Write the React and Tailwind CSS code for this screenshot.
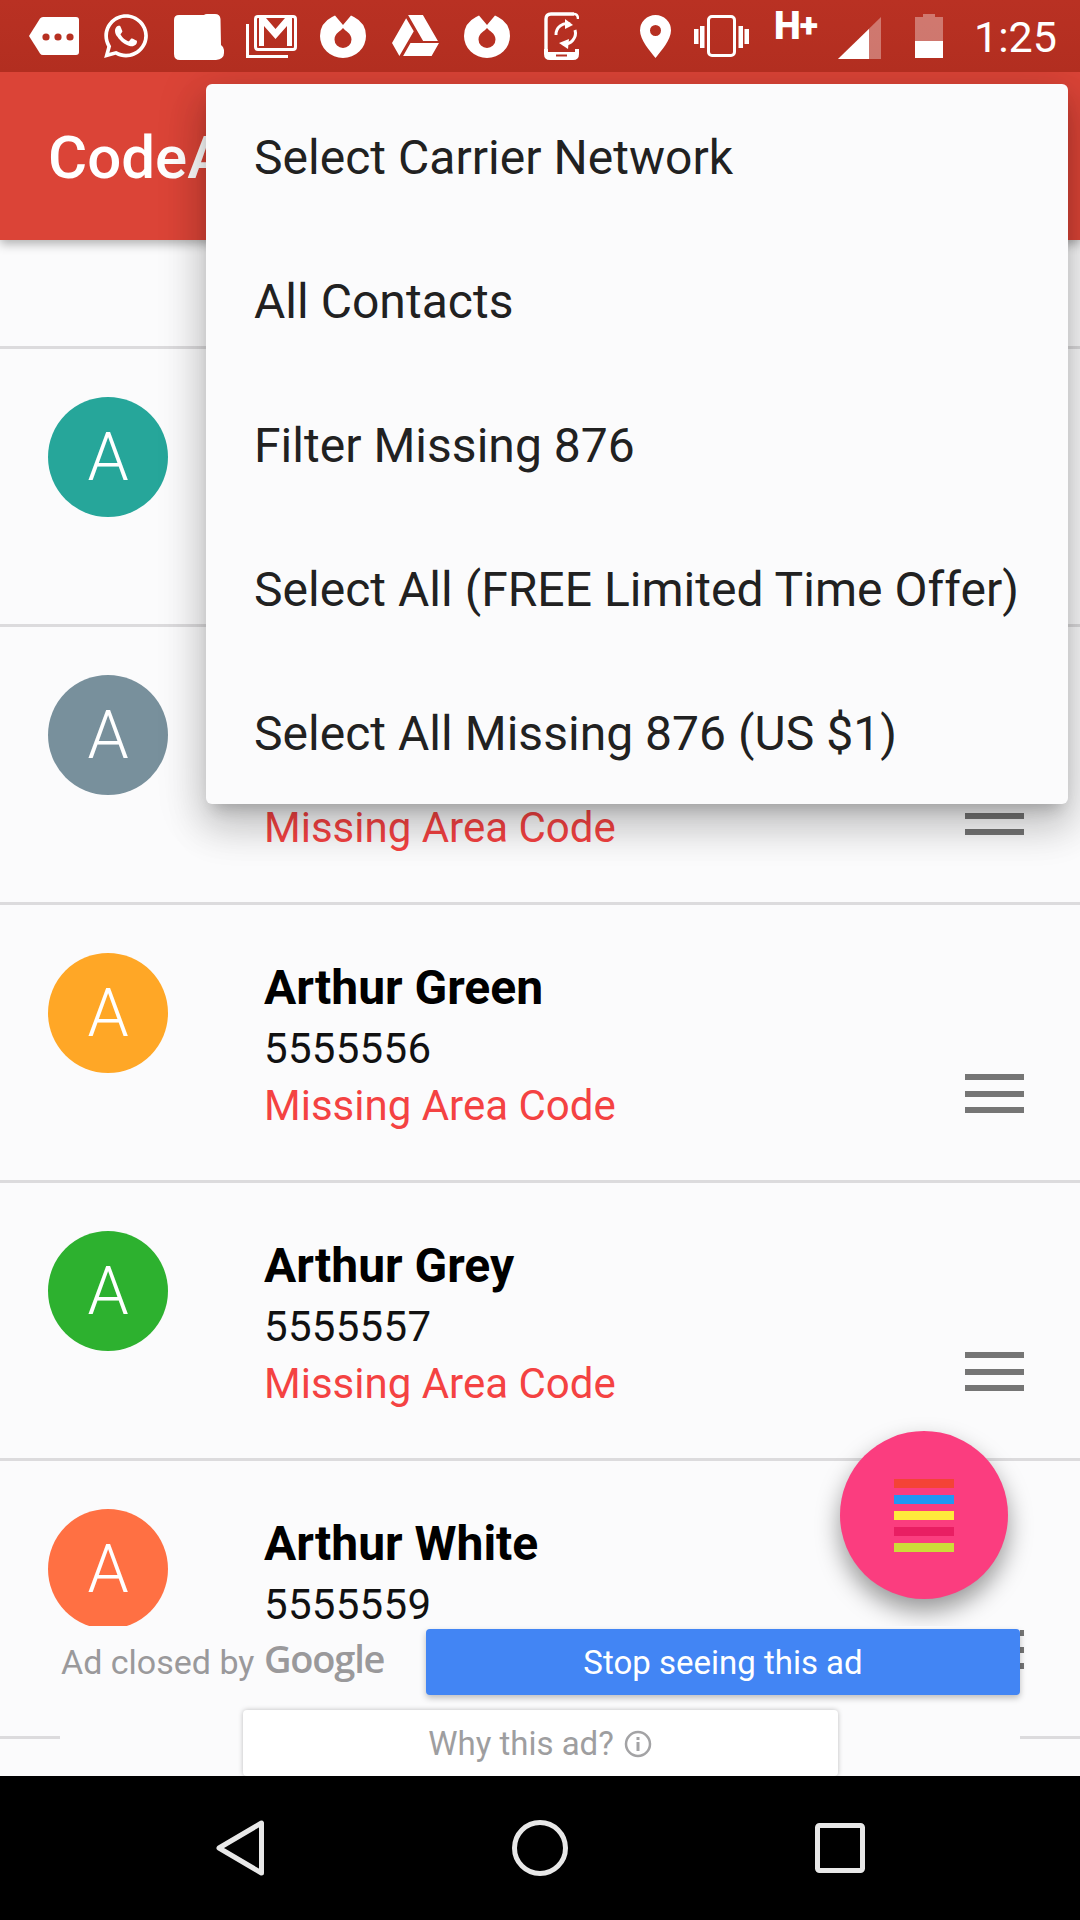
import React from "react";
import { FaWhatsapp, FaGoogleDrive } from "react-icons/fa";

const BAR = "#b73022";

function TagIcon() {
  return (
    <svg width="50" height="38" viewBox="0 0 50 38" className="ml-[29px] mt-[17px] shrink-0">
      <path d="M0 19 L11 1.5 Q12 0 14 0 H47 Q50 0 50 3 V35 Q50 38 47 38 H14 Q12 38 11 36.5 Z" fill="#fff" />
      <circle cx="17" cy="20" r="3.6" fill={BAR} />
      <circle cx="29" cy="20" r="3.6" fill={BAR} />
      <circle cx="41" cy="20" r="3.6" fill={BAR} />
    </svg>
  );
}

function BlobIcon() {
  return (
    <svg width="50" height="46" viewBox="0 0 50 46" className="ml-[23px] mt-[14px] shrink-0">
      <path d="M5 1 H30 Q31 0 33 0 H41 Q46 0 46.5 5 L47 31 Q50 33 50 36 V39 Q50 45 42 46 H6 Q0 46 0 40 V6 Q0 1 5 1 Z" fill="#fff" />
    </svg>
  );
}

function GmailIcon() {
  return (
    <svg width="51" height="43" viewBox="0 0 51 43" className="ml-[22px] mt-[15px] shrink-0">
      <path d="M1.5 9 V41.5 H42" fill="none" stroke="#fff" strokeWidth="3" />
      <rect x="9.5" y="1.5" width="40" height="33" rx="2.5" fill="none" stroke="#fff" strokeWidth="3" />
      <path d="M13 3 H20 L29.5 14 L39 3 H46 V31 H41 V11 L29.5 24 L18 11 V31 H13 Z" fill="#fff" />
    </svg>
  );
}

function DonutIcon({ ml }) {
  return (
    <svg width="46" height="44" viewBox="0 0 46 44" className={ml + " mt-[15px] shrink-0"}>
      <path d="M12 2 L15 0.5 L23 10 L31 0.5 L34 2 Q46 8 46 21 A23 22 0 0 1 0 21 Q0 8 12 2 Z" fill="#fff" />
      <path d="M23 13 C25 16 31.5 18 31.5 24.5 A8.5 8.5 0 0 1 14.5 24.5 C14.5 18 21 16 23 13 Z" fill={BAR} />
    </svg>
  );
}

function SyncPhoneIcon() {
  return (
    <svg width="35" height="48" viewBox="0 0 35 48" className="ml-[34px] mt-[12px] shrink-0">
      <path d="M30 2 H7 Q2 2 2 7 V38" fill="none" stroke="#fff" strokeWidth="3.4" />
      <path d="M0 37 H4 V40 H31 V37 H35 V42 Q35 48 29 48 H6 Q0 48 0 42 Z" fill="#fff" />
      <path d="M30 2 Q34 2 34 7" fill="none" stroke="#fff" strokeWidth="2.4" />
      <rect x="12" y="42.5" width="11" height="2" fill={BAR} />
      <path d="M12 23 A11 11 0 0 1 26 12" fill="none" stroke="#fff" strokeWidth="3" />
      <path d="M21 7 L29 13 L21 17 Z" fill="#fff" />
      <path d="M31 18 A11 11 0 0 1 19 32" fill="none" stroke="#fff" strokeWidth="3" />
      <path d="M25 27 L15 31 L24 37 Z" fill="#fff" />
    </svg>
  );
}

function PinIcon() {
  return (
    <svg width="31" height="43" viewBox="0 0 31 43" className="ml-[61px] mt-[15px] shrink-0">
      <path fillRule="evenodd" d="M15.5 0 A15.5 15.5 0 0 1 31 15.5 C31 25 21 36 15.5 43 C10 36 0 25 0 15.5 A15.5 15.5 0 0 1 15.5 0 Z M15.5 10 A5.5 5.5 0 1 0 15.5 21 A5.5 5.5 0 1 0 15.5 10 Z" fill="#fff" />
    </svg>
  );
}

function VibrateIcon() {
  return (
    <svg width="55" height="42" viewBox="0 0 55 42" className="ml-[23px] mt-[15px] shrink-0">
      <rect x="14.5" y="1.5" width="26" height="39" rx="3.5" fill="none" stroke="#fff" strokeWidth="3" />
      <rect x="0" y="14" width="4.5" height="15" fill="#fff" />
      <rect x="50.5" y="14" width="4.5" height="15" fill="#fff" />
      <rect x="6" y="11" width="4.5" height="22" fill="#fff" />
      <rect x="44.5" y="11" width="4.5" height="22" fill="#fff" />
    </svg>
  );
}

function SignalIcon() {
  return (
    <svg width="43" height="42" viewBox="0 0 43 42" className="ml-[17px] mt-[17px] shrink-0">
      <path d="M0 42 L43 0 V42 Z" fill="#fff" fillOpacity="0.35" />
      <path d="M0 42 L31 12 V42 Z" fill="#fff" />
    </svg>
  );
}

function BatteryIcon() {
  return (
    <svg width="28" height="44" viewBox="0 0 28 44" className="ml-[34px] mt-[14px] shrink-0">
      <path d="M8 0 H20 V3 H28 V27 H0 V3 H8 Z" fill="#fff" fillOpacity="0.35" />
      <rect x="0" y="27" width="28" height="17" fill="#fff" />
    </svg>
  );
}

function StatusBar() {
  return (
    <div className="relative z-30 flex h-[72px] shrink-0 items-start bg-gradient-to-b from-[#b93123] to-[#b22e20]">
      <TagIcon />
      <FaWhatsapp size={50} color="#fff" className="ml-[22px] mt-[11px] shrink-0" />
      <BlobIcon />
      <GmailIcon />
      <DonutIcon ml="ml-[23px]" />
      <FaGoogleDrive size={47} color="#fff" className="ml-[26px] mt-[12px] shrink-0" />
      <DonutIcon ml="ml-[25px]" />
      <SyncPhoneIcon />
      <PinIcon />
      <VibrateIcon />
      <div className="ml-[25px] mt-[4px] flex w-[47px] shrink-0 items-center text-[38px] leading-[44px] font-black text-white">
        <span>H</span>
        <span className="-ml-px -mt-[3px] text-[34px]">+</span>
      </div>
      <SignalIcon />
      <BatteryIcon />
      <span className="ml-[31px] mt-[12px] text-[43px] leading-[50px] font-normal text-white">1:25</span>
    </div>
  );
}

function AppBar() {
  return (
    <div className="relative z-10 flex h-[168px] shrink-0 items-center bg-[#db4437] pl-[48px] pt-[4px] shadow-[0_4px_10px_rgba(0,0,0,0.3)]">
      <span className="text-[60px] font-medium text-white">CodeArea</span>
    </div>
  );
}

function Hamburger() {
  return (
    <div className="ml-auto mr-[56px] mt-[169px] flex w-[59px] shrink-0 flex-col gap-[10.5px]">
      <div className="h-[6px] bg-[#757575]" />
      <div className="h-[6px] bg-[#757575]" />
      <div className="h-[6px] bg-[#757575]" />
    </div>
  );
}

function Row({ color, name, phone, missing = true }) {
  return (
    <div className="flex h-[278px] shrink-0 border-b-[3px] border-[#dcdbdd]">
      <div className={"ml-[48px] mt-[48px] flex h-[120px] w-[120px] shrink-0 items-center justify-center rounded-full text-[66px] font-[350] text-white " + color}>
        A
      </div>
      <div className="ml-[96px] mt-[57px] flex flex-col text-[42px] leading-[58px]">
        <span className="h-[58px] text-[48px] leading-[52px] font-bold text-black">{name}</span>
        <span className="h-[58px] tracking-[0.3px] text-[#111]">{phone}</span>
        {missing && <span className="leading-[56px] text-[#f44242]">Missing Area Code</span>}
      </div>
      <Hamburger />
    </div>
  );
}

function Menu() {
  const items = [
    "Select Carrier Network",
    "All Contacts",
    "Filter Missing 876",
    "Select All (FREE Limited Time Offer)",
    "Select All Missing 876 (US $1)",
  ];
  return (
    <div className="absolute left-[206px] top-[84px] z-20 flex w-[862px] flex-col rounded-[6px] bg-[#fbfbfc] shadow-[0_24px_38px_3px_rgba(0,0,0,0.14),0_9px_46px_8px_rgba(0,0,0,0.12),0_11px_15px_-7px_rgba(0,0,0,0.2)]">
      {items.map((t) => (
        <div key={t} className="flex h-[144px] items-center whitespace-nowrap pl-[48px] pt-[3px] text-[48px] tracking-[0.03px] text-[#212121]">
          {t}
        </div>
      ))}
    </div>
  );
}

function Fab() {
  const stripes = ["bg-[#f44336]", "bg-[#2196f3]", "bg-[#ffeb3b]", "bg-[#e91e63]", "bg-[#cddc39]"];
  return (
    <div className="absolute left-[840px] top-[1431px] z-10 flex h-[168px] w-[168px] flex-col items-center justify-center gap-[7px] rounded-full bg-[#fb3d7f] shadow-[0_12px_24px_rgba(0,0,0,0.4)]">
      {stripes.map((s) => (
        <div key={s} className={"h-[9px] w-[60px] " + s} />
      ))}
    </div>
  );
}

function AdOverlay() {
  return (
    <div className="absolute left-[60px] top-[1626px] z-10 flex h-[150px] w-[960px] flex-col bg-[#fbfbfc]">
      <div className="flex h-[69px] items-start pt-[3px]">
        <span className="ml-px mt-[12px] w-[203px] text-[34px] leading-[42px] text-[#9a999b]">Ad closed by</span>
        <span className="mt-[4px] w-[162px] font-['Open_Sans'] text-[38px] leading-[50px] font-semibold tracking-[-1.2px] text-[#9a999b]">Google</span>
        <div className="flex h-[66px] w-[594px] items-center justify-center rounded-[4px] bg-[#4285f4] pt-[2px] text-[33px] text-white shadow-[0_3px_6px_rgba(0,0,0,0.25)]">
          Stop seeing this ad
        </div>
      </div>
      <div className="mt-[15px] flex h-[66px] w-[595px] items-center justify-center gap-[10px] self-center rounded-[4px] bg-white pt-[2px] text-[33px] text-[#9e9ea0] shadow-[0_0_5px_rgba(0,0,0,0.25)]">
        <span>Why this ad?</span>
        <svg width="28" height="28" viewBox="0 0 28 28">
          <circle cx="14" cy="14" r="12" fill="none" stroke="#a3a3a5" strokeWidth="2.5" />
          <rect x="12.5" y="12" width="3" height="9" fill="#a3a3a5" />
          <rect x="12.5" y="7" width="3" height="3" fill="#a3a3a5" />
        </svg>
      </div>
    </div>
  );
}

function NavBar() {
  return (
    <div className="relative z-20 flex h-[144px] shrink-0 items-center justify-center bg-black">
      <div className="flex w-[300px] justify-center">
        <svg width="48" height="56" viewBox="0 0 48 56">
          <path d="M45.5 3 V53 L3 28 Z" fill="none" stroke="#e8e8e8" strokeWidth="5" strokeLinejoin="round" />
        </svg>
      </div>
      <div className="flex w-[300px] justify-center">
        <svg width="56" height="56" viewBox="0 0 56 56">
          <circle cx="28" cy="28" r="25.5" fill="none" stroke="#e8e8e8" strokeWidth="5" />
        </svg>
      </div>
      <div className="flex w-[300px] justify-center">
        <svg width="50" height="50" viewBox="0 0 50 50">
          <rect x="2.5" y="2.5" width="45" height="45" rx="2" fill="none" stroke="#e8e8e8" strokeWidth="5" />
        </svg>
      </div>
    </div>
  );
}

export default function App() {
  return (
    <div className="relative flex h-[1920px] w-[1080px] flex-col overflow-hidden bg-[#fbfbfc] font-['Roboto',sans-serif]">
      <StatusBar />
      <AppBar />
      <div className="flex min-h-0 flex-1 flex-col overflow-hidden">
        <div className="h-[109px] shrink-0 border-b-[3px] border-[#dcdbdd]" />
        <Row color="bg-[#26a69a]" />
        <Row color="bg-[#78909c]" />
        <Row color="bg-[#ffa726]" name="Arthur Green" phone="5555556" />
        <Row color="bg-[#2db12f]" name="Arthur Grey" phone="5555557" />
        <Row color="bg-[#ff7043]" name="Arthur White" phone="5555559" missing={false} />
      </div>
      <NavBar />
      <Menu />
      <Fab />
      <AdOverlay />
    </div>
  );
}
